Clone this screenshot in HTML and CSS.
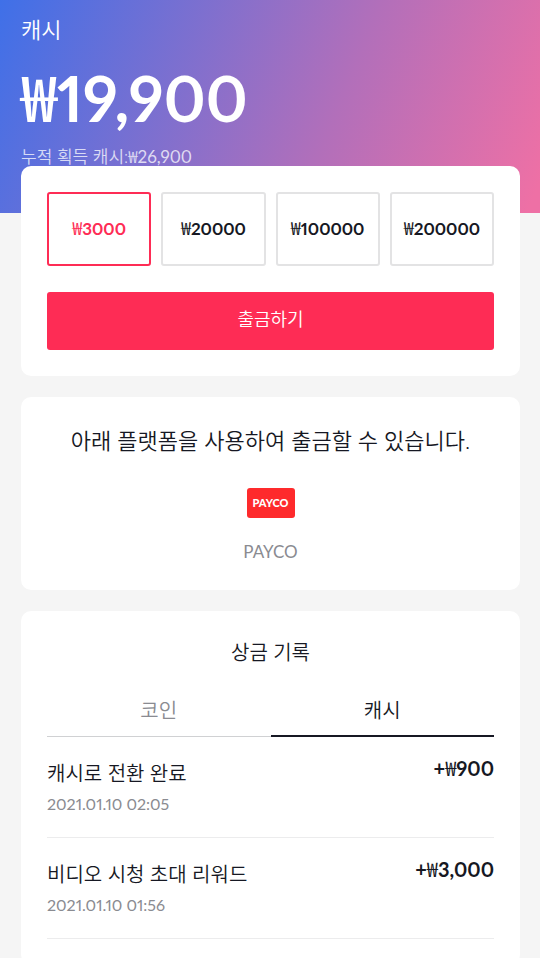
FILE: index.html
```html
<!DOCTYPE html>
<html lang="ko">

	<head>
		<meta charset="UTF-8">
		<meta name="viewport" content="width=device-width, initial-scale=1">
		<title>캐시</title>
		<link rel="stylesheet" href="styles.css">
	</head>

	<body>
		<header class="header">
			<h1 class="header-title">캐시</h1>
			<p class="balance"><span class="won">₩</span>19,900</p>
			<p class="total">누적 획득 캐시:<span class="won">₩</span><span class="num">26,900</span></p>
		</header>

		<main class="main">
			<section class="card withdraw">
				<div class="amounts">
					<button type="button" class="amount active"><span class="won">₩</span>3000</button>
					<button type="button" class="amount"><span class="won">₩</span>20000</button>
					<button type="button" class="amount"><span class="won">₩</span>100000</button>
					<button type="button" class="amount"><span class="won">₩</span>200000</button>
				</div>
				<button type="button" class="submit">출금하기</button>
			</section>

			<section class="card platform">
				<h2 class="platform-title">아래 플랫폼을 사용하여 출금할 수 있습니다.</h2>
				<div class="payco-logo">PAYCO</div>
				<p class="platform-name">PAYCO</p>
			</section>

			<section class="card record">
				<h2 class="record-title">상금 기록</h2>
				<div class="tabs">
					<button type="button" class="tab">코인</button>
					<button type="button" class="tab active">캐시</button>
				</div>
				<ul class="list">
					<li class="item">
						<div>
							<p class="item-name">캐시로 전환 완료</p>
							<p class="item-time">2021.01.10 02:05</p>
						</div>
						<span class="item-money">+<span class="won">₩</span>900</span>
					</li>
					<li class="item">
						<div>
							<p class="item-name">비디오 시청 초대 리워드</p>
							<p class="item-time">2021.01.10 01:56</p>
						</div>
						<span class="item-money">+<span class="won">₩</span>3,000</span>
					</li>
				</ul>
			</section>
		</main>
	</body>

</html>
```
FILE: styles.css
```css
* {
	margin: 0;
	padding: 0;
	box-sizing: border-box;
}

body {
	background: #f5f5f5;
	color: #161823;
	font-family: Lato, "Noto Sans CJK KR", sans-serif;
	font-variant-numeric: proportional-nums;
	font-weight: 350;
}

button {
	border: none;
	background: none;
	color: inherit;
	font: inherit;
	font-variant-numeric: inherit;
	cursor: pointer;
}

ul {
	list-style: none;
}

h1,
h2 {
	font-weight: 350;
}

.won {
	font-family: "Noto Sans CJK KR", sans-serif;
	font-weight: 400;
}

/* header */
.header {
	height: 213px;
	padding: 14px 21px 0;
	background: linear-gradient(112deg, #3f70e8 0%, #b26fba 61%, #ee70a5 98%);
	color: #fff;
}

.header-title {
	font-size: 22px;
	line-height: 32px;
}

.balance {
	margin-top: 11px;
	font-size: 63px;
	font-weight: 700;
	line-height: 76px;
}

.balance .won {
	font-weight: 500;
}

.total {
	margin-top: 8px;
	color: rgba(255, 255, 255, 0.75);
	font-size: 17px;
	line-height: 24px;
}

.total .won {
	font-weight: 350;
}

.num {
	font-weight: 400;
}

/* cards */
.main {
	display: flex;
	flex-direction: column;
	gap: 21px;
	margin-top: -47px;
	padding: 0 20px 21px 21px;
}

.card {
	padding: 26px;
	border-radius: 10px;
	background: #fff;
}

.amounts {
	display: grid;
	grid-template-columns: repeat(4, 1fr);
	gap: 10px;
}

.amount {
	height: 74px;
	padding-bottom: 4px;
	border: 2px solid #e3e3e4;
	border-radius: 3px;
	font-size: 17px;
	font-weight: 700;
}

.amount .won {
	font-size: 18px;
}

.amount.active {
	border-color: #fe2c55;
	color: #fe2c55;
}

.submit {
	width: 100%;
	height: 58px;
	margin-top: 26px;
	padding-bottom: 6px;
	border-radius: 3px;
	background: #fe2c55;
	color: #fff;
	font-size: 18px;
}

/* platform */
.platform {
	text-align: center;
}

.platform-title {
	font-size: 22px;
	line-height: 36px;
}

.payco-logo {
	width: 48px;
	margin: 29px auto 0;
	border-radius: 3px;
	background: #fe2a2c;
	color: #fff;
	font-size: 11px;
	font-weight: 900;
	line-height: 30px;
}

.platform-name {
	margin-top: 22px;
	color: #8a8b91;
	font-size: 17px;
	font-weight: 400;
	line-height: 24px;
}

/* record */
.record-title {
	font-size: 20px;
	line-height: 30px;
	text-align: center;
}

.tabs {
	display: flex;
	align-items: flex-end;
	margin-top: 16px;
}

.tab {
	flex: 1;
	height: 54px;
	border-bottom: 1px solid #d0d1d3;
	color: #8a8b91;
	font-size: 20px;
}

.tab.active {
	border-bottom: 2px solid #161823;
	color: #161823;
}

.item {
	display: flex;
	justify-content: space-between;
	padding: 20px 0;
	border-bottom: 1px solid #ececed;
}

.item-name {
	font-size: 20px;
	line-height: 32px;
}

.item-time {
	margin-top: 3px;
	padding-bottom: 1px;
	color: #8a8b91;
	font-size: 16px;
	font-weight: 400;
	line-height: 24px;
}

.item-money {
	font-size: 20px;
	font-weight: 700;
	line-height: 22px;
}
```
